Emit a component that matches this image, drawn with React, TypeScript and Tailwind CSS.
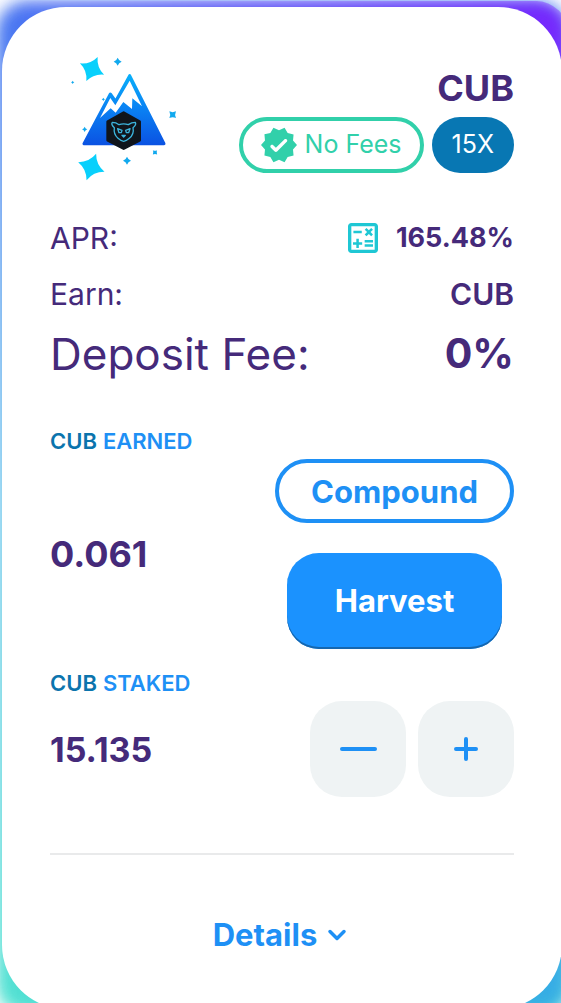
import { ChevronDown } from "lucide-react";
import type { ReactNode } from "react";

const STAR = "M0 -1 Q0.26 -0.26 1 0 Q0.26 0.26 0 1 Q-0.26 0.26 -1 0 Q-0.26 -0.26 0 -1Z";

const stars = [
  { x: 96, y: 72, size: 40, rotate: 25 },
  { x: 94, y: 366, size: 42, rotate: 20 },
  { x: 173, y: 50, size: 12, rotate: 0 },
  { x: 338, y: 209, size: 14, rotate: 45 },
  { x: 285, y: 322, size: 9, rotate: 45 },
  { x: 201, y: 347, size: 12, rotate: 0 },
  { x: 74, y: 253, size: 8, rotate: 0 },
  { x: 130, y: 163, size: 5, rotate: 0 },
  { x: 38, y: 112, size: 5, rotate: 0 },
];

const FarmLogo = () => (
  <svg viewBox="-30 30 420 405" className="w-[140px] shrink-0" aria-hidden="true">
    <defs>
      <linearGradient id="mountain" gradientUnits="userSpaceOnUse" x1="0" y1="88" x2="0" y2="300">
        <stop offset="0" stopColor="#08b0fa" />
        <stop offset="0.5" stopColor="#0a80f3" />
        <stop offset="1" stopColor="#0b52e2" />
      </linearGradient>
    </defs>
    {stars.map((star) => (
      <path
        key={`${star.x}-${star.y}`}
        d={STAR}
        fill={star.size > 20 ? "#08d0fc" : "#12a9ee"}
        transform={`translate(${star.x} ${star.y}) rotate(${star.rotate}) scale(${star.size})`}
      />
    ))}
    <path
      d="M209 92 L312 296 H72 L151 147 L167 169Z"
      fill="url(#mountain)"
      stroke="url(#mountain)"
      strokeWidth="9"
      strokeLinejoin="round"
    />
    <path
      d="M209 107 L246 184 L217 160 L216 192 L190 171 L167 203 L152 190 L120 219 L151 159 L166 181Z"
      fill="#fff"
    />
    <path
      d="M191 203 L239 230 V286 L191 311 L143 286 V230Z"
      fill="#10151c"
      stroke="#10151c"
      strokeWidth="8"
      strokeLinejoin="round"
    />
    <g fill="none" stroke="#3cb4dc" strokeWidth="4" strokeLinejoin="round" strokeLinecap="round">
      <path d="M163 248 Q152 238 157 232 Q168 232 177 239 Q191 234 205 239 Q215 232 226 232 Q230 239 219 248 Q223 268 208 280 Q199 288 191 289 Q183 288 174 280 Q160 268 163 248Z" />
      <path d="M173 251 L186 256 L184 263 H177Z M210 251 L197 256 L199 263 H206Z" />
      <path d="M186 271 H196 L191 276Z" fill="#3cb4dc" />
    </g>
  </svg>
);

const VerifiedIcon = () => (
  <svg viewBox="1 1 22 22" className="size-9" fill="currentColor" aria-hidden="true">
    <path d="M23 12l-2.44-2.79.34-3.69-3.61-.82-1.89-3.2L12 2.96 8.6 1.5 6.71 4.69 3.1 5.5l.34 3.7L1 12l2.44 2.79-.34 3.7 3.61.82L8.6 22.5l3.4-1.47 3.4 1.46 1.89-3.19 3.61-.82-.34-3.69L23 12zM9.38 16.01L7 13.61c-.39-.39-.39-1.02 0-1.41l.07-.07c.39-.39 1.03-.39 1.42 0l1.61 1.62 5.15-5.16c.39-.39 1.03-.39 1.42 0l.07.07c.39.39.39 1.02 0 1.41l-5.92 5.94c-.41.39-1.04.39-1.44 0z" />
  </svg>
);

const CalculateIcon = () => (
  <svg viewBox="3 3 18 18" className="size-[30px]" fill="currentColor" aria-hidden="true">
    <path d="M19 3H5c-1.1 0-2 .9-2 2v14c0 1.1.9 2 2 2h14c1.1 0 2-.9 2-2V5c0-1.1-.9-2-2-2zm0 16H5V5h14v14z" />
    <path d="M6.25 7.72h5v1.5h-5zM13 15.75h5v1.5h-5zM13 13.25h5v1.5h-5zM8 18h1.5v-2h2v-1.5h-2v-2H8v2H6V16h2zM14.09 10.95l1.41-1.41 1.41 1.41 1.06-1.06-1.41-1.42 1.41-1.41L16.91 6 15.5 7.41 14.09 6l-1.06 1.06 1.41 1.41-1.41 1.42z" />
  </svg>
);

const SectionLabel = ({ token, text }: { token: string; text: string }) => (
  <h3 className="flex h-9 items-center gap-1.5 text-[22px] font-semibold text-[#1e90f5]">
    <span className="text-[#0b74ad]">{token}</span>
    {text}
  </h3>
);

const StakeButton = ({ label, children }: { label: string; children: ReactNode }) => (
  <button
    type="button"
    aria-label={label}
    className="flex size-24 items-center justify-center rounded-[32px] bg-[#eff3f4] text-[#1e90f5]"
  >
    {children}
  </button>
);

const FarmCard = () => (
  <article className="relative rounded-[64px] bg-white px-12 pt-12 pb-[42px]">
    <header className="flex justify-between">
      <FarmLogo />
      <div className="flex flex-col items-end pt-3">
        <h2 className="text-[36px] leading-[42px] font-bold">CUB</h2>
        <div className="mt-2 flex gap-2">
          <span className="flex h-14 items-center gap-2 rounded-full border-4 border-[#31d0aa] px-[18px] text-[25px] whitespace-nowrap text-[#31d0aa]">
            <VerifiedIcon />
            No Fees
          </span>
          <span className="flex h-14 items-center rounded-full bg-[#0877b3] px-5 text-[25px] text-white">
            15X
          </span>
        </div>
      </div>
    </header>

    <dl className="mt-6">
      <div className="mb-2 flex h-12 items-center justify-between text-[30px]">
        <dt>APR:</dt>
        <dd className="flex items-center gap-[18px] text-[27px] font-bold">
          <button type="button" aria-label="Open APR calculator" className="text-[#1fc7d4]">
            <CalculateIcon />
          </button>
          165.48%
        </dd>
      </div>
      <div className="flex h-12 items-center justify-between text-[30px]">
        <dt>Earn:</dt>
        <dd className="font-semibold">CUB</dd>
      </div>
      <div className="flex h-[72px] items-center justify-between text-[44px]">
        <dt>Deposit Fee:</dt>
        <dd className="text-[41px] font-bold">0%</dd>
      </div>
    </dl>

    <section className="mt-[33px]">
      <SectionLabel token="CUB" text="EARNED" />
      <div className="flex items-center justify-between">
        <span className="text-[36px] font-bold">0.061</span>
        <div className="flex flex-col items-center gap-[30px]">
          <button
            type="button"
            className="h-16 rounded-full border-4 border-[#1e90f5] px-8 text-[31px] leading-none font-bold text-[#1e90f5]"
          >
            Compound
          </button>
          <button
            type="button"
            className="h-24 rounded-[32px] bg-[#1b92fe] px-12 text-[31px] font-bold text-white shadow-[inset_0_-2px_0_#1667af]"
          >
            Harvest
          </button>
        </div>
      </div>
    </section>

    <section className="mt-4">
      <SectionLabel token="CUB" text="STAKED" />
      <div className="flex items-center justify-between">
        <span className="text-[34px] font-bold">15.135</span>
        <div className="flex gap-3">
          <StakeButton label="Unstake">
            <span className="h-1 w-[37px] rounded-full bg-current" />
          </StakeButton>
          <StakeButton label="Stake">
            <svg viewBox="0 0 24 24" className="size-6" stroke="currentColor" strokeWidth="4" strokeLinecap="round">
              <path d="M12 2V22M2 12H22" />
            </svg>
          </StakeButton>
        </div>
      </div>
    </section>

    <hr className="mt-14 border-t-2 border-[#e9eaeb]" />

    <button
      type="button"
      className="mx-auto mt-12 flex h-16 items-center gap-1.5 text-[31px] font-bold text-[#1e90f5]"
    >
      Details
      <ChevronDown className="size-7" strokeWidth={3} />
    </button>
  </article>
);

export default function App() {
  return (
    <main className="h-screen overflow-hidden bg-white pt-[7px] pl-[2px] font-['Inter',sans-serif] text-[#452a7a]">
      <div className="relative -mr-px">
        {/* Glow around the card */}
        <div className="absolute -inset-1.5 rounded-[32px] bg-[linear-gradient(to_bottom,#3467f0,#66c4ec_50%,#3fe0cc)] opacity-90 blur-[8px]" />
        <div className="absolute -inset-1.5 rounded-[32px] bg-[linear-gradient(to_bottom,#7d17ff,#6a8cf5_50%,#2fa6e6)] [mask-image:linear-gradient(to_right,transparent,black)] opacity-90 blur-[8px]" />
        <FarmCard />
      </div>
    </main>
  );
}
